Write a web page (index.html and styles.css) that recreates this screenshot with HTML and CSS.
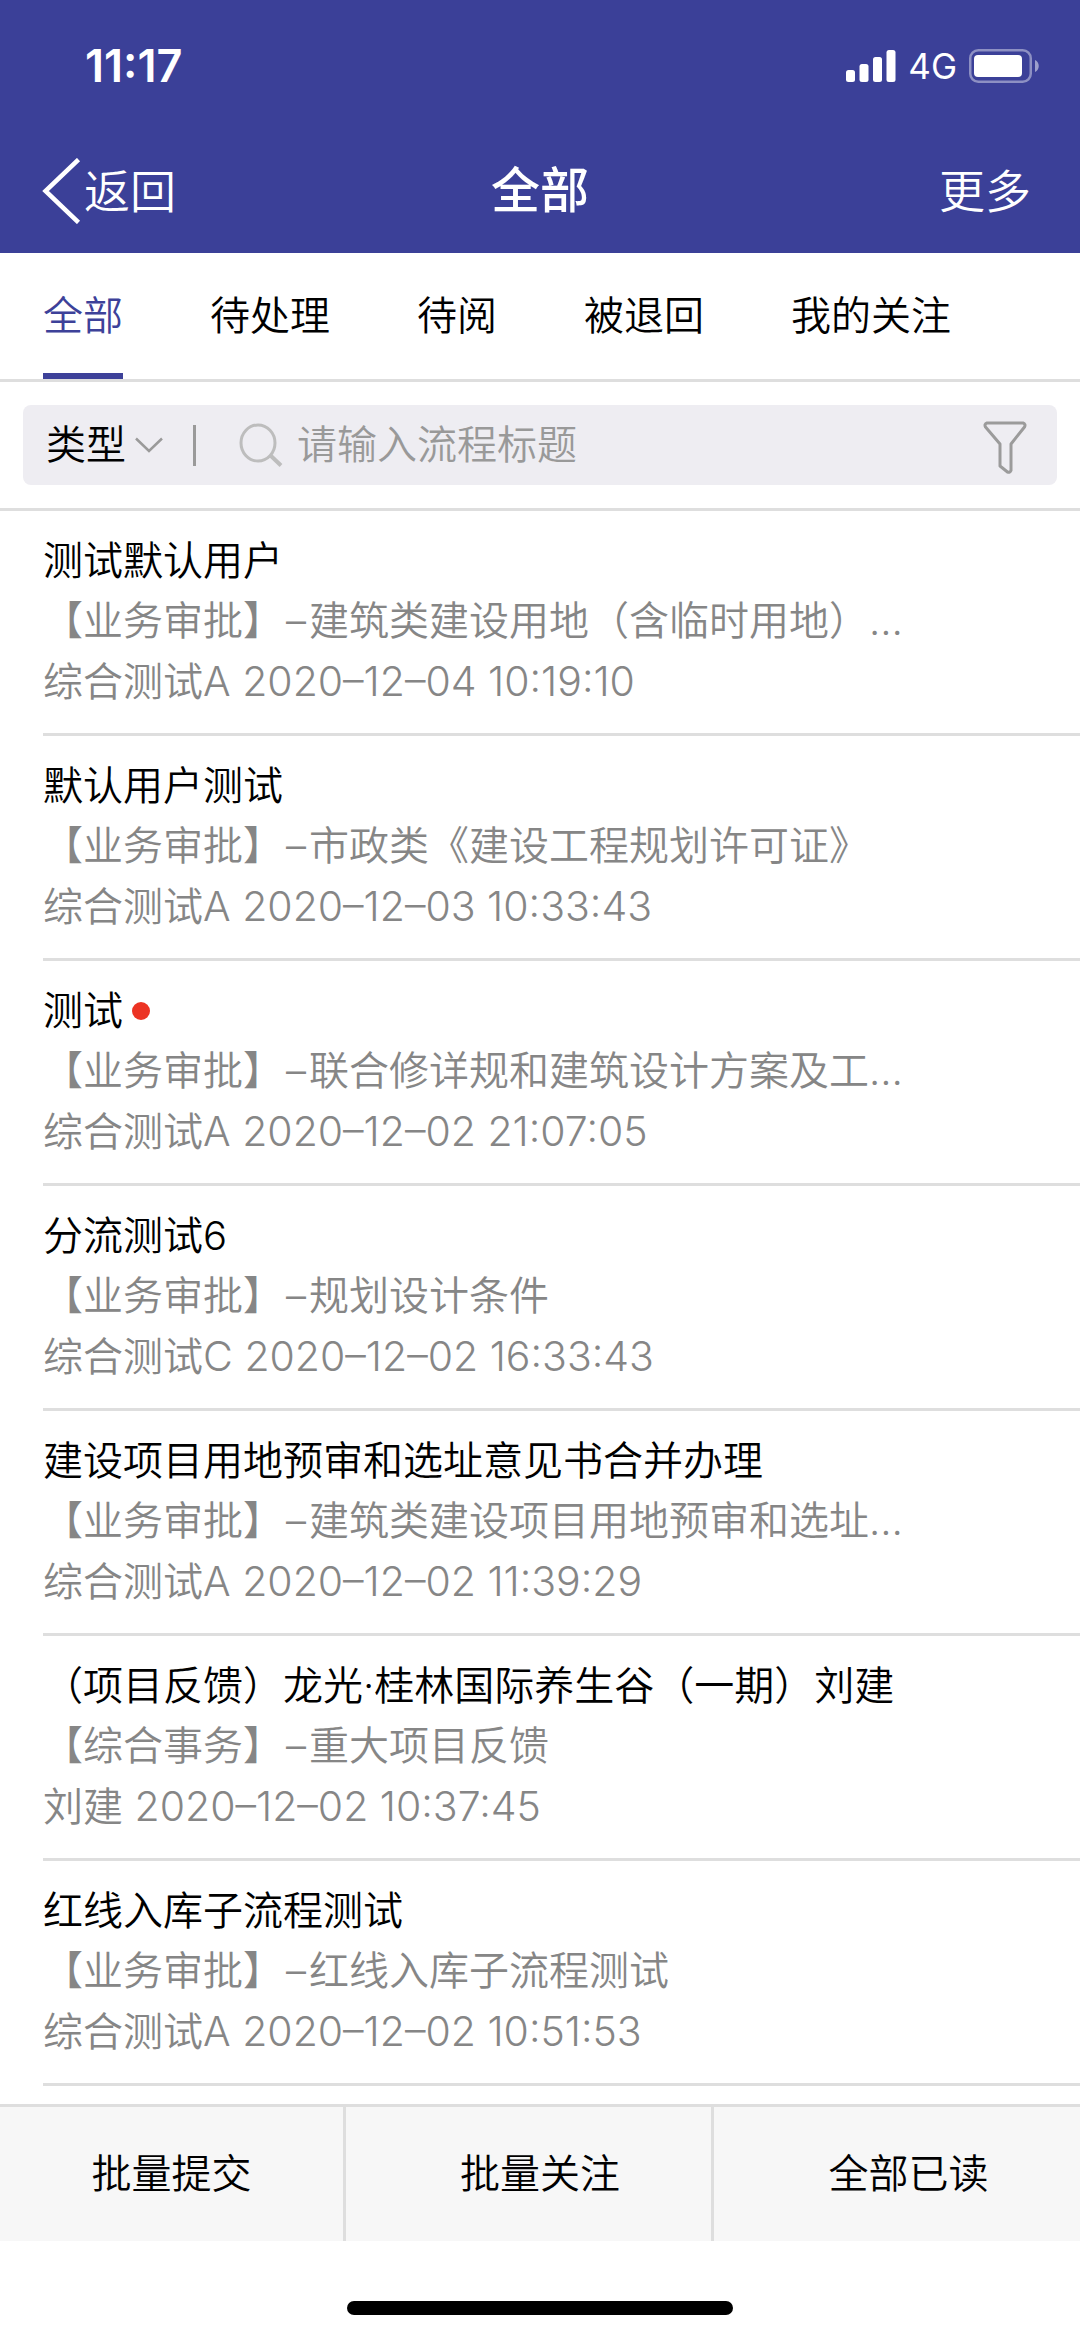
FILE: index.html
```html
<!DOCTYPE html>
<html lang="zh-CN">
<head>
<meta charset="utf-8">
<meta name="viewport" content="width=device-width">
<title>全部</title>
<link rel="stylesheet" href="styles.css">
</head>
<body>
<header class="header">
  <div class="status">
    <time class="clock">11:17</time>
    <div class="indicators">
      <svg class="signal" width="50" height="32" viewBox="0 0 50 32" fill="#fff" aria-hidden="true"><rect x="0" y="20" width="9" height="12" rx="2.5"/><rect x="13.5" y="14" width="9" height="18" rx="2.5"/><rect x="27" y="7" width="9" height="25" rx="2.5"/><rect x="40.5" y="0" width="9" height="32" rx="2.5"/></svg>
      <span class="network">4G</span>
      <svg class="battery" width="70" height="34" viewBox="0 0 70 34" aria-hidden="true"><rect x="1.25" y="1.25" width="60.5" height="31.5" rx="8" fill="none" stroke="#fff" stroke-opacity=".42" stroke-width="2.5"/><rect x="5" y="6" width="48" height="22" rx="4" fill="#fff"/><path d="M66 11c5 2 5 10 0 12z" fill="#fff" fill-opacity=".5"/></svg>
    </div>
  </div>
  <div class="navbar">
    <button class="nav-button back" type="button"><svg width="39" height="66" viewBox="0 0 39 66" fill="none" stroke="#fff" stroke-width="4.5" aria-hidden="true"><path d="M36.500 1.500L3.500 33l33 31.500"/></svg>返回</button>
    <h1 class="page-title">全部</h1>
    <button class="nav-button more" type="button">更多</button>
  </div>
</header>

<nav class="tabs">
  <a class="tab active" href="#all" aria-current="page">全部</a>
  <a class="tab" href="#todo">待处理</a>
  <a class="tab" href="#unread">待阅</a>
  <a class="tab" href="#returned">被退回</a>
  <a class="tab" href="#followed">我的关注</a>
</nav>

<form class="search">
  <div class="search-box">
    <select class="type" aria-label="类型"><option>类型</option></select>
    <svg class="caret" width="28" height="16" viewBox="0 0 28 16" fill="none" stroke="#9a9a9a" stroke-width="2.500" aria-hidden="true"><path d="M1 1.500l13 12.500 13-12.500"/></svg>
    <span class="divider"></span>
    <svg class="magnifier" width="44" height="44" viewBox="0 0 44 44" fill="none" stroke="#bdbdbd" stroke-width="3" aria-hidden="true"><ellipse cx="19" cy="20" rx="17" ry="18"/><path d="M31 32l11 10.500" stroke-width="4"/></svg>
    <input class="query" type="search" placeholder="请输入流程标题" aria-label="流程标题">
    <button class="filter" type="button" aria-label="筛选"><svg width="44" height="54" viewBox="0 0 44 54" fill="none" stroke="#9b9b9b" stroke-width="3" stroke-linejoin="round" aria-hidden="true"><path d="M4 2h36q3 1 1.500 4L28 23v26.500q-1 2.500-3.500 1.500L17 45V23L2.500 6Q1 3 4 2z"/></svg></button>
  </div>
</form>

<main class="list">
  <article class="item">
    <h2 class="item-title">测试默认用户</h2>
    <p class="item-text">【业务审批】<span class="dash">–</span>建筑类建设用地（含临时用地）…</p>
    <p class="item-text">综合测试<span class="latin">A 2020–12–04 10:19:10</span></p>
  </article>
  <article class="item">
    <h2 class="item-title">默认用户测试</h2>
    <p class="item-text">【业务审批】<span class="dash">–</span>市政类《建设工程规划许可证》</p>
    <p class="item-text">综合测试<span class="latin">A 2020–12–03 10:33:43</span></p>
  </article>
  <article class="item">
    <h2 class="item-title">测试<span class="unread"></span></h2>
    <p class="item-text">【业务审批】<span class="dash">–</span>联合修详规和建筑设计方案及工…</p>
    <p class="item-text">综合测试<span class="latin">A 2020–12–02 21:07:05</span></p>
  </article>
  <article class="item">
    <h2 class="item-title">分流测试6</h2>
    <p class="item-text">【业务审批】<span class="dash">–</span>规划设计条件</p>
    <p class="item-text">综合测试<span class="latin">C 2020–12–02 16:33:43</span></p>
  </article>
  <article class="item">
    <h2 class="item-title">建设项目用地预审和选址意见书合并办理</h2>
    <p class="item-text">【业务审批】<span class="dash">–</span>建筑类建设项目用地预审和选址…</p>
    <p class="item-text">综合测试<span class="latin">A 2020–12–02 11:39:29</span></p>
  </article>
  <article class="item">
    <h2 class="item-title">（项目反馈）龙光·桂林国际养生谷（一期）刘建</h2>
    <p class="item-text">【综合事务】<span class="dash">–</span>重大项目反馈</p>
    <p class="item-text">刘建<span class="latin"> 2020–12–02 10:37:45</span></p>
  </article>
  <article class="item">
    <h2 class="item-title">红线入库子流程测试</h2>
    <p class="item-text">【业务审批】<span class="dash">–</span>红线入库子流程测试</p>
    <p class="item-text">综合测试<span class="latin">A 2020–12–02 10:51:53</span></p>
  </article>
</main>

<footer class="footer">
  <div class="actions">
    <button class="action" type="button">批量提交</button>
    <button class="action" type="button">批量关注</button>
    <button class="action" type="button">全部已读</button>
  </div>
  <div class="home-area"><span class="home-indicator"></span></div>
</footer>
</body>
</html>
```
FILE: styles.css
```css
* {
  box-sizing: border-box;
}

body {
  margin: 0;
  min-height: 100vh;
  display: flex;
  flex-direction: column;
  background: #fff;
  color: #000;
  font-family: Inter, "Noto Sans CJK SC", sans-serif;
  font-size: 40px;
  font-weight: 350;
  line-height: 60px;
}

button,
input,
select {
  margin: 0;
  padding: 0;
  border: 0;
  border-radius: 0;
  background: none;
  color: inherit;
  font: inherit;
  appearance: none;
}

svg {
  display: block;
  flex: none;
}

.header {
  background: #3b4098;
  color: #fff;
}

.status {
  display: flex;
  align-items: center;
  justify-content: space-between;
  height: 132px;
  padding: 0 41px 0 85px;
}

.clock {
  font-size: 45px;
  font-weight: 600;
}

.indicators {
  display: flex;
  align-items: center;
  gap: 12px;
}

.network {
  font-size: 35px;
  font-weight: 400;
}

.navbar {
  display: grid;
  grid-template-columns: 1fr auto 1fr;
  align-items: center;
  height: 121px;
  padding: 0 42px 4px;
}

.nav-button {
  display: flex;
  align-items: center;
  gap: 3px;
  font-size: 46px;
}

.more {
  justify-self: end;
  padding-right: 7px;
}

.page-title {
  margin: 0;
  font-size: 49px;
  font-weight: 500;
}

.tabs {
  display: flex;
  gap: 87px;
  height: 129px;
  padding: 0 43px;
  border-bottom: 3px solid #dedede;
}

.tab {
  display: flex;
  align-items: center;
  border-top: 6px solid transparent;
  border-bottom: 6px solid transparent;
  color: inherit;
  text-decoration: none;
  white-space: nowrap;
}

.tab.active {
  border-bottom-color: #3d4199;
  color: #3d4199;
}

.search {
  padding: 23px;
  border-bottom: 3px solid #dedede;
}

.search-box {
  display: flex;
  align-items: center;
  height: 80px;
  padding: 0 30px 0 23px;
  border-radius: 8px;
  background: #eeedf2;
}

.type {
  width: 80px;
  height: 60px;
}

.caret {
  margin-left: 9px;
}

.divider {
  width: 3px;
  height: 41px;
  margin: 0 43px 0 30px;
  background: #9a9a9a;
}

.query {
  flex: 1;
  min-width: 0;
  height: 60px;
  margin-left: 14px;
  outline: 0;
}

.query::placeholder {
  color: #999;
  opacity: 1;
}

.filter {
  padding-top: 6px;
}

.list {
  flex: 1;
  padding-left: 43px;
}

.item {
  padding: 20px 0 22px;
  border-bottom: 3px solid #dedede;
}

.item-title,
.item-text {
  height: 60px;
  margin: 0;
  overflow: hidden;
  font-size: 40px;
  font-weight: 350;
  line-height: 60px;
  white-space: nowrap;
  text-overflow: ellipsis;
}

.item-title {
  display: flex;
  align-items: center;
  gap: 9px;
}

.item-text {
  color: #868686;
}

.dash {
  padding: 0 3px;
}

.latin {
  font-size: 41px;
}

.unread {
  width: 18px;
  height: 18px;
  border-radius: 50%;
  background: #ec3323;
}

.actions {
  display: grid;
  grid-template-columns: 346fr 368fr 366fr;
  height: 137px;
  border-top: 3px solid #dedede;
  background: #f7f7f7;
}

.action {
  border-right: 3px solid #dedede;
}

.action + .action {
  padding-left: 23px;
}

.action:last-child {
  border-right: 0;
}

.home-area {
  display: flex;
  justify-content: center;
  height: 98px;
  padding-top: 60px;
}

.home-indicator {
  width: 386px;
  height: 14px;
  border-radius: 7px;
  background: #000;
}
```
